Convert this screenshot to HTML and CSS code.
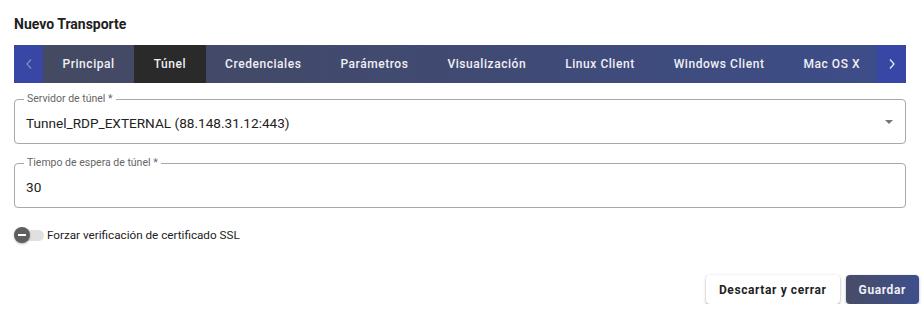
FILE: index.html
```html
<!DOCTYPE html>
<html lang="es">
<head>
    <meta charset="UTF-8">
    <meta name="viewport" content="width=device-width, initial-scale=1.0">
    <title>Nuevo Transporte</title>
    <link rel="stylesheet" href="styles.css">
</head>
<body>
    <div class="dialog">
        <h2 class="dialog-title">Nuevo Transporte</h2>

        <div class="tabs">
            <button class="tab-arrow disabled">
                <svg width="6" height="10" viewBox="0 0 6 10"><polyline points="5,0.5 1,5 5,9.5" fill="none" stroke="currentColor" stroke-width="1.3"/></svg>
            </button>
            <div class="tab-list">
                <div class="tab">Principal</div>
                <div class="tab active">Túnel</div>
                <div class="tab">Credenciales</div>
                <div class="tab">Parámetros</div>
                <div class="tab">Visualización</div>
                <div class="tab">Linux Client</div>
                <div class="tab">Windows Client</div>
                <div class="tab">Mac OS X</div>
            </div>
            <button class="tab-arrow">
                <svg width="6" height="10" viewBox="0 0 6 10"><polyline points="1,0.5 5,5 1,9.5" fill="none" stroke="currentColor" stroke-width="1.3"/></svg>
            </button>
        </div>

        <div class="field field-first">
            <label class="field-label">Servidor de túnel *</label>
            <div class="field-value">Tunnel_RDP_EXTERNAL (88.148.31.12:443)</div>
            <span class="select-arrow"></span>
        </div>

        <div class="field">
            <label class="field-label">Tiempo de espera de túnel *</label>
            <div class="field-value">30</div>
        </div>

        <div class="toggle-row">
            <div class="toggle">
                <span class="toggle-track"></span>
                <span class="toggle-thumb"></span>
            </div>
            <span class="toggle-label">Forzar verificación de certificado SSL</span>
        </div>

        <div class="actions">
            <button class="btn btn-light">Descartar y cerrar</button>
            <button class="btn btn-primary">Guardar</button>
        </div>
    </div>
</body>
</html>
```

FILE: styles.css
```css
body {
    margin: 0;
    font-family: Roboto, "Liberation Sans", Arial, sans-serif;
    background: white;
    color: #212121;
}
.dialog {
    padding: 14px 5px 0 14px;
}
.dialog-title {
    margin: 0 13px 0 0;
    font-size: 14px;
    font-weight: 700;
    line-height: 18px;
    height: 18px;
    padding-top: 1px;
}
.tabs {
    display: flex;
    height: 38px;
    margin: 12px 13px 0 0;
    background: linear-gradient(90deg, #454a61 0%, #404a72 50%, #3d4d8b 100%);
}
.tab-arrow {
    width: 29px;
    flex: none;
    border: none;
    padding: 0;
    background: #3847a6;
    color: #e8eaf6;
    display: flex;
    align-items: center;
    justify-content: center;
}
.tab-arrow.disabled {
    color: #7f89c4;
}
.tab-list {
    flex: 1;
    display: flex;
    overflow: hidden;
}
.tab {
    flex: none;
    padding: 0 19.5px;
    display: flex;
    align-items: center;
    color: #f0f0f4;
    font-size: 12px;
    font-weight: 500;
    letter-spacing: 0.55px;
    white-space: nowrap;
}
.tab.active {
    background: #2a2a2a;
}
.field {
    position: relative;
    display: flex;
    align-items: center;
    height: 43px;
    margin: 19px 13px 0 0;
    padding: 0 12px 0 11px;
    border: 1px solid #a8a8a8;
    border-radius: 4px;
}
.field-first {
    margin-top: 16px;
}
.field-label {
    position: absolute;
    top: -7px;
    left: 9px;
    padding: 0 3px;
    background: white;
    color: #666;
    font-size: 10.5px;
    line-height: 12px;
}
.field-value {
    flex: 1;
    font-size: 13.6px;
    color: #222;
    padding-top: 2px;
}
.select-arrow {
    width: 0;
    height: 0;
    border-left: 4px solid transparent;
    border-right: 4px solid transparent;
    border-top: 4px solid #757575;
    margin-top: 1px;
}
.toggle-row {
    display: flex;
    align-items: center;
    height: 20px;
    margin-top: 17px;
}
.toggle {
    position: relative;
    width: 30px;
    height: 20px;
    margin-right: 3px;
}
.toggle-track {
    position: absolute;
    left: 6px;
    top: 5px;
    width: 24px;
    height: 11px;
    border-radius: 6px;
    background: #e0e0e0;
}
.toggle-thumb {
    position: absolute;
    left: 0;
    top: 2px;
    width: 16px;
    height: 16px;
    border-radius: 50%;
    background: #5f5f5f;
    box-shadow: 0 1px 2px rgba(0, 0, 0, 0.3);
}
.toggle-thumb::after {
    content: "";
    position: absolute;
    left: 4px;
    top: 7px;
    width: 8px;
    height: 2px;
    background: white;
}
.toggle-label {
    font-size: 11.7px;
    color: #222;
}
.actions {
    display: flex;
    justify-content: flex-end;
    gap: 6px;
    margin-top: 30px;
}
.btn {
    height: 29px;
    padding: 0 13px;
    border: none;
    border-radius: 4px;
    font-family: Roboto, "Liberation Sans", Arial, sans-serif;
    font-size: 12px;
    font-weight: 700;
    letter-spacing: 0.6px;
    cursor: pointer;
}
.btn-light {
    background: white;
    color: #1f1f1f;
    box-shadow: 0 1px 3px rgba(0, 0, 0, 0.3), 0 1px 1px rgba(0, 0, 0, 0.14);
}
.btn-primary {
    background: linear-gradient(90deg, #474c66, #3e4f8c);
    color: #eef0f6;
    box-shadow: 0 1px 3px rgba(0, 0, 0, 0.3);
}
```
